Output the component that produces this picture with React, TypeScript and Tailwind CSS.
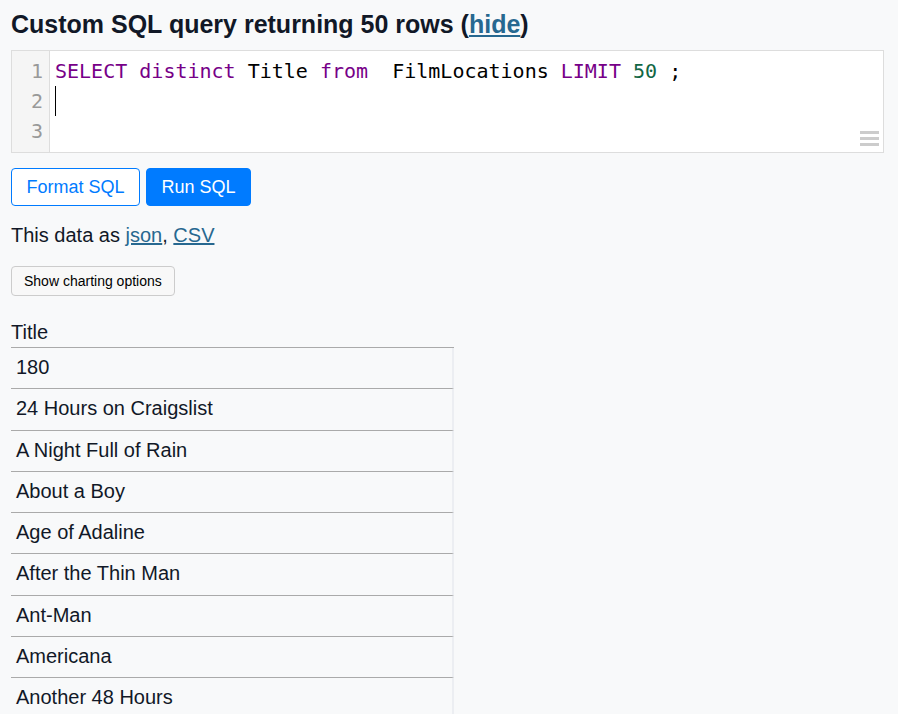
const titles = [
  "180",
  "24 Hours on Craigslist",
  "A Night Full of Rain",
  "About a Boy",
  "Age of Adaline",
  "After the Thin Man",
  "Ant-Man",
  "Americana",
  "Another 48 Hours",
];

function SqlEditor() {
  return (
    <div className="relative mr-[3px] flex h-[103px] border border-[#ddd] bg-white font-['DejaVu_Sans_Mono',monospace] text-[20px] leading-[30px]">
      {/* gutter */}
      <div className="w-[38px] shrink-0 border-r border-[#ddd] bg-[#f5f5f5] pt-[5px] pr-[6px] text-right text-[#999]">
        <div>1</div>
        <div>2</div>
        <div>3</div>
      </div>
      <div className="pl-[5px] pt-[5px] whitespace-pre text-black">
        <div>
          <span className="text-[#770088]">SELECT</span> <span className="text-[#770088]">distinct</span> Title{" "}
          <span className="text-[#770088]">from</span>  FilmLocations <span className="text-[#770088]">LIMIT</span>{" "}
          <span className="text-[#116644]">50</span> ;
        </div>
        <div className="relative h-[30px]">
          <span className="absolute left-0 top-0 h-[30px] w-px bg-black" />
        </div>
        <div className="h-[30px]" />
      </div>
      {/* resize grip */}
      <div className="absolute right-[4px] bottom-[6px] flex w-[19px] flex-col gap-[3px]">
        <span className="h-[3px] bg-[#ccc]" />
        <span className="h-[3px] bg-[#ccc]" />
        <span className="h-[3px] bg-[#ccc]" />
      </div>
    </div>
  );
}

export default function App() {
  return (
    <div className="h-[714px] overflow-hidden bg-[#f8f9fa] px-[11px] font-['Liberation_Sans',Arial,sans-serif] text-[#111827]">
      <h3 className="pt-[9px] pb-[11px] text-[25px] font-bold leading-[30px]">
        Custom SQL query returning 50 rows (
        <a href="#" className="text-[#276890] underline">
          hide
        </a>
        )
      </h3>

      <SqlEditor />

      <div className="mt-[15px] flex gap-[6px]">
        <button className="h-[38px] rounded-[4px] border border-[#007bff] bg-white px-[14.5px] text-[18px] text-[#007bff]">
          Format SQL
        </button>
        <button className="h-[38px] rounded-[4px] border border-[#007bff] bg-[#007bff] px-[14.5px] text-[18px] text-white">
          Run SQL
        </button>
      </div>

      <p className="mt-[14px] text-[20px] leading-[30px]">
        This data as{" "}
        <a href="#" className="text-[#276890] underline">
          json
        </a>
        ,{" "}
        <a href="#" className="text-[#276890] underline">
          CSV
        </a>
      </p>

      <button className="mt-[16px] h-[30px] rounded-[4px] border border-[#ccc] bg-[#f8f8f8] px-[12px] text-[14px] text-black">
        Show charting options
      </button>

      <table className="mt-[21px] w-[443px] border-separate border-spacing-0 text-[20px] leading-[30px]">
        <thead>
          <tr>
            <th className="w-[441px] border-b border-[#aaa] p-0 text-left font-normal">Title</th>
          </tr>
        </thead>
        <tbody>
          {titles.map((t) => (
            <tr key={t}>
              <td className="h-[41.25px] border-r-2 border-b border-r-[#eceef2] border-b-[#aaa] px-[5px] pt-[4px] pb-[6px]">
                {t}
              </td>
            </tr>
          ))}
        </tbody>
      </table>
    </div>
  );
}
